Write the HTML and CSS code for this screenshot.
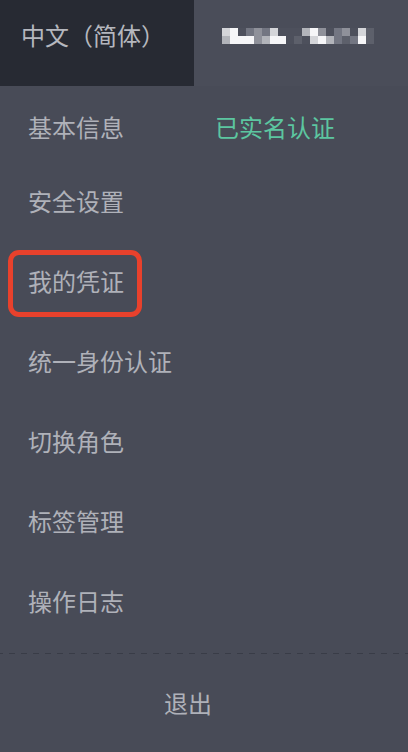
FILE: index.html
```html
<!DOCTYPE html>
<html lang="zh-CN">
<head>
<meta charset="utf-8">
<title>用户菜单</title>
<link rel="stylesheet" href="styles.css">
</head>
<body>
<div class="panel">
  <header class="top">
    <div class="lang">中文（简体）</div>
    <div class="user">
      <div class="mosaic">
        <span class="c1"></span><span class="c0"></span><span class="c5"></span><span class="c4"></span><span class="c3"></span><span class="c4"></span><span class="c1"></span><span class="c5"></span><span class="c5"></span><span class="c5"></span><span class="c2"></span><span class="c0"></span><span class="c3"></span><span class="c5"></span><span class="c4"></span><span class="c3"></span><span class="c5"></span><span class="c1"></span><span class="c6"></span>
        <span class="c2"></span><span class="c0"></span><span class="c0"></span><span class="c0"></span><span class="c3"></span><span class="c2"></span><span class="c0"></span><span class="c0"></span><span class="c5"></span><span class="c6"></span><span class="c5"></span><span class="c1"></span><span class="c0"></span><span class="c2"></span><span class="c4"></span><span class="c6"></span><span class="c4"></span><span class="c0"></span><span class="c6"></span>
      </div>
    </div>
  </header>
  <nav class="menu">
    <div class="item first"><span class="label">基本信息</span><span class="status">已实名认证</span></div>
    <div class="item">安全设置</div>
    <div class="item marked">我的凭证<span class="highlight"></span></div>
    <div class="item">统一身份认证</div>
    <div class="item">切换角色</div>
    <div class="item">标签管理</div>
    <div class="item">操作日志</div>
  </nav>
  <div class="divider"></div>
  <div class="logout">退出</div>
</div>
</body>
</html>
```

FILE: styles.css
```css
html, body {
  margin: 0;
  padding: 0;
  background: #484b57;
}
body {
  font-family: "Noto Sans CJK SC", "Noto Sans", sans-serif;
  width: 408px;
  height: 752px;
  overflow: hidden;
}
.panel {
  display: flex;
  flex-direction: column;
  height: 752px;
}
.top {
  display: flex;
  height: 86px;
}
.lang {
  width: 194px;
  background: #272a33;
  color: #b5b7be;
  font-size: 24px;
  line-height: 30px;
  padding: 20px 0 0 21px;
  box-sizing: border-box;
}
.user {
  flex: 1;
  background: #4a4d59;
  padding: 28px 0 0 28px;
  box-sizing: border-box;
}
.mosaic {
  display: grid;
  grid-template-columns: repeat(19, 8px);
  grid-auto-rows: 8px;
}
.mosaic span { display: block; }
.c0 { background: #f6f6f8; }
.c1 { background: #d4d5d9; }
.c2 { background: #b2b4ba; }
.c3 { background: #8f919a; }
.c4 { background: #737682; }
.c5 { background: #4d505c; }
.c6 { background: #5d606b; }
.menu {
  display: flex;
  flex-direction: column;
  padding: 7px 0 12px;
}
.item {
  position: relative;
  display: flex;
  align-items: center;
  height: 80px;
  padding-left: 28px;
  color: #afb1b9;
  font-size: 24px;
  line-height: 30px;
}
.item.first {
  height: 68px;
}
.label {
  width: 187px;
}
.status {
  color: #5cc6a0;
}
.highlight {
  position: absolute;
  left: 8px;
  top: 9px;
  width: 134px;
  height: 67px;
  box-sizing: border-box;
  border: 5px solid #e8412c;
  border-radius: 11px;
}
.divider {
  height: 1px;
  background: repeating-linear-gradient(to right, #393c47 0 6px, transparent 6px 12px);
  background-position: 9px 0;
}
.logout {
  flex: 1;
  display: flex;
  align-items: center;
  justify-content: center;
  padding-right: 32px;
  color: #afb1b9;
  font-size: 24px;
  line-height: 30px;
}
```
